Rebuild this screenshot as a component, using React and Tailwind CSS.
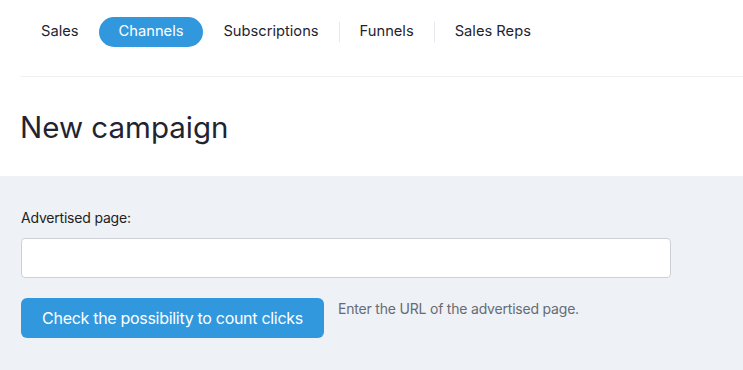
import React from "react";

const tabs = [
  { label: "Sales" },
  { label: "Channels", active: true },
  { label: "Subscriptions", divider: true },
  { label: "Funnels", divider: true },
  { label: "Sales Reps" },
];

const App = () => {
  return (
    <div className="min-h-[370px] bg-white font-['Inter',sans-serif] text-[#1f2430]">
      {/* Top nav */}
      <div className="ml-5 border-b border-[#eef0f3]">
        <nav className="flex items-center h-[61px] pt-[2px] pl-[1px]">
          {tabs.map((t) => (
            <React.Fragment key={t.label}>
              <button
                className={
                  t.active
                    ? "h-[30px] px-[20px] rounded-full bg-[#3198de] text-white text-[14.7px]"
                    : "h-[30px] px-[20px] text-[14.7px] text-[#1f2430]"
                }
              >
                {t.label}
              </button>
              {t.divider && <span className="w-px h-5 bg-[#e3e9ef]" />}
            </React.Fragment>
          ))}
        </nav>
        <div className="h-[15px]" />
      </div>

      {/* Title */}
      <div className="px-5 pt-[32px] h-[99px]">
        <h1 className="text-[29.5px] leading-[36px] text-[#1f2430]">New campaign</h1>
      </div>

      {/* Form area */}
      <div className="bg-[#eef1f6] px-[21px] pt-[32px] pb-[32px]">
        <label className="block text-[14px] leading-[20px] text-[#222] mb-[10px] tracking-[-0.2px]">
          Advertised page:
        </label>
        <input
          type="text"
          className="block w-[650px] h-[40px] bg-white border border-[#cdd0d5] rounded-[4px] outline-none px-3"
        />
        <div className="flex items-start gap-[14px] mt-[20px]">
          <button className="h-[40px] w-[303px] rounded-[6px] bg-[#3198de] text-white text-[16px] tracking-[-0.3px]">
            Check the possibility to count clicks
          </button>
          <p className="text-[14px] leading-[20px] text-[#666b73] pt-[1px] tracking-[-0.2px]">
            Enter the URL of the advertised page.
          </p>
        </div>
      </div>
    </div>
  );
};

export default App;
